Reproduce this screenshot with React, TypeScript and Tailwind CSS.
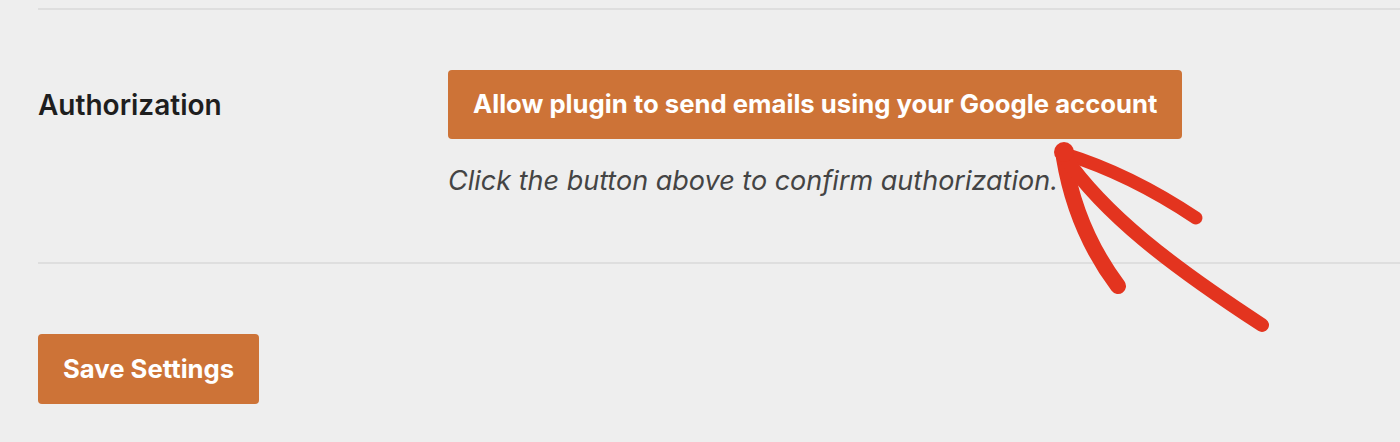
import React from "react";

function Arrow() {
  return (
    <svg
      className="absolute left-[1040px] top-[130px]"
      width="240"
      height="210"
      viewBox="0 0 240 210"
      fill="none"
    >
      <g stroke="#e3341f" strokeLinecap="round" strokeLinejoin="round">
        <path d="M25 24 Q 90 44 156 88" strokeWidth="13" />
        <path d="M24 28 Q 36 100 78 156" strokeWidth="16" />
        <path d="M24 26 C 65 85, 130 135, 222 195" strokeWidth="14" />
      </g>
      <circle cx="24" cy="22" r="10" fill="#e3341f" />
    </svg>
  );
}

export default function App() {
  return (
    <div
      className="relative w-full h-[442px] overflow-hidden bg-[#eeeeee] pl-[38px]"
      style={{ fontFamily: "Inter, 'Noto Sans', sans-serif" }}
    >
      <div className="mt-[8px] border-t-2 border-[#dedede]" />

      {/* Authorization row */}
      <div className="flex items-start pt-[60px]">
        <div className="w-[410px] h-[69px] flex items-center text-[28px] font-semibold text-[#1e1e1e]">
          Authorization
        </div>
        <div className="flex flex-col items-start">
          <button className="h-[69px] px-[25px] rounded-[4px] bg-[#cd7337] text-white font-bold text-[25.7px]">
            Allow plugin to send emails using your Google account
          </button>
          <p className="mt-[26px] text-[27px] leading-[32px] italic text-[#444444]">
            Click the button above to confirm authorization.
          </p>
        </div>
      </div>

      <div className="mt-[65px] border-t-2 border-[#dedede]" />

      <div className="pt-[70px]">
        <button className="h-[70px] px-[25px] rounded-[4px] bg-[#cd7337] text-white font-bold text-[25.7px]">
          Save Settings
        </button>
      </div>

      <Arrow />
    </div>
  );
}
